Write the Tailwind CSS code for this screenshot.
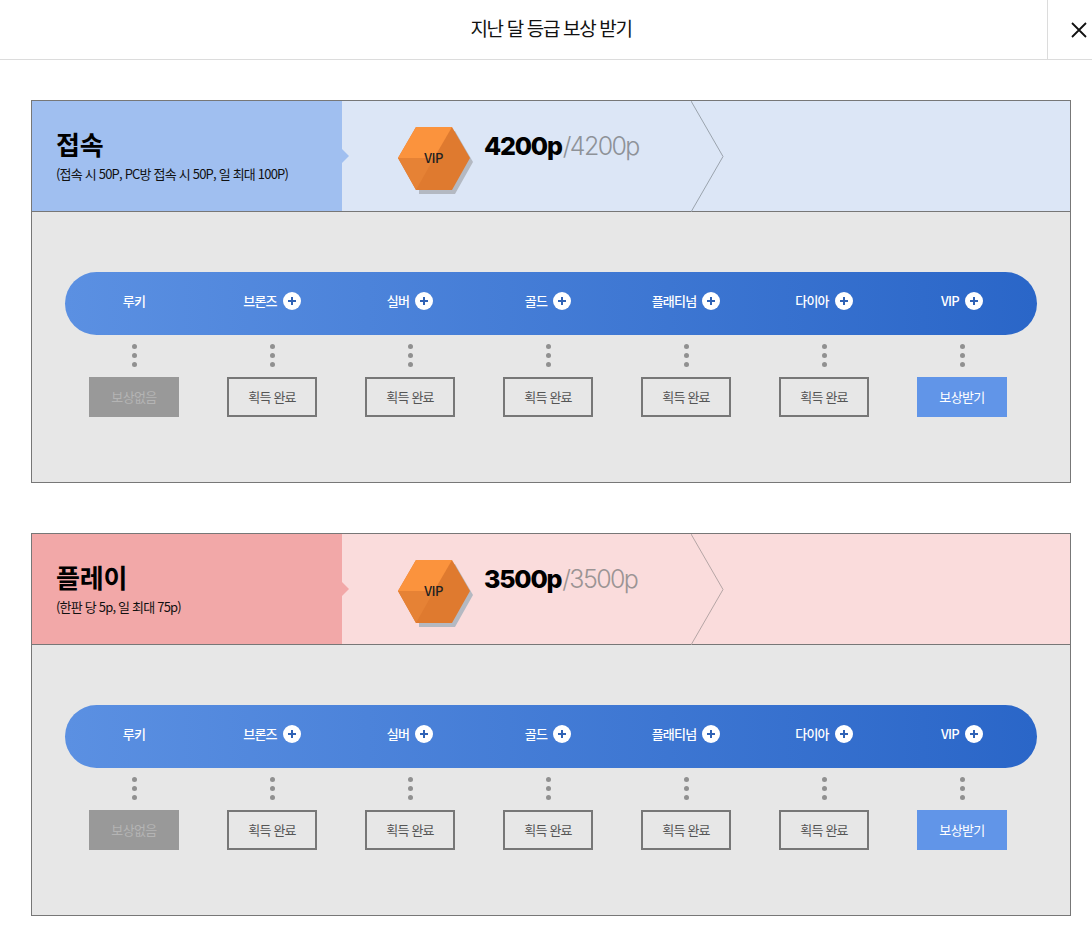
<!DOCTYPE html>
<html lang="ko">
<head>
    <meta charset="UTF-8">
    <title>지난 달 등급 보상 받기</title>
    <script src="https://cdn.jsdelivr.net/npm/@tailwindcss/browser@4"></script>
</head>
<body class="bg-white font-['Noto_Sans_CJK_KR','Noto_Sans',sans-serif] overflow-hidden">
    <!-- Header -->
    <header class="relative h-[60px] border-b border-[#dcdcdc] flex items-center justify-center">
        <h1 class="text-[19px] leading-none tracking-[-1.35px] text-[#111] pb-[5px] ml-[10px]">지난 달 등급 보상 받기</h1>
        <button class="absolute right-0 top-0 h-[59px] w-[45px] border-l border-[#dcdcdc] flex items-center justify-end pr-[4px]">
            <svg class="w-[18px] h-[18px]" viewBox="0 0 18 18" fill="none" stroke="#111" stroke-width="1.8"><path d="M2 2l14 14M16 2L2 16"/></svg>
        </button>
    </header>

    <main id="sections" class="pt-10 px-[31px] w-[1071px] box-content flex flex-col gap-[50px]"></main>

    <script>
        const themes = {
            blue: { left: 'bg-[#a0bff0]', right: 'bg-[#dce6f6]', notch: '#a0bff0', line: '#9aa3ad', total: 'text-[#8e9298]' },
            red: { left: 'bg-[#f2a8a8]', right: 'bg-[#fadcdc]', notch: '#f2a8a8', line: '#b5a5a5', total: 'text-[#9b9494]' }
        };
        const sections = [
            { theme: 'blue', title: '접속', desc: '(접속 시 50P, PC방 접속 시 50P, 일 최대 100P)', point: '4200p' },
            { theme: 'red', title: '플레이', desc: '(한판 당 5p, 일 최대 75p)', point: '3500p' }
        ];
        const grades = ['루키', '브론즈', '실버', '골드', '플래티넘', '다이아', 'VIP'];

        const plus = `<svg class="w-[18px] h-[18px] ml-[6px] shrink-0" viewBox="0 0 18 18"><circle cx="9" cy="9" r="9" fill="#fff"/><path d="M9 5v8M5 9h8" stroke="#2f62b5" stroke-width="2"/></svg>`;

        function statusButton(i) {
            if (i === 0) return `<div class="w-[90px] h-10 bg-[#999999] text-[#b4b4b4] text-[13px] tracking-[-0.6px] pb-px flex items-center justify-center">보상없음</div>`;
            if (i === 6) return `<div class="w-[90px] h-10 bg-[#6195e8] text-white text-[13px] tracking-[-0.6px] pb-px flex items-center justify-center">보상받기</div>`;
            return `<div class="w-[90px] h-10 border-2 border-[#777] text-[#555] text-[13px] tracking-[-0.8px] pb-px flex items-center justify-center">획득 완료</div>`;
        }

        document.getElementById('sections').innerHTML = sections.map(s => {
            const t = themes[s.theme];
            return `
            <section class="w-[1040px] h-[383px] border border-[#777] bg-[#e7e7e7]">
                <div class="flex h-[111px] border-b border-[#777]">
                    <div class="w-[310px] ${t.left} pl-[24px] pt-[25px] relative">
                        <h2 class="text-[26px] leading-[36px] font-bold text-black tracking-[-0.2px]">${s.title}</h2>
                        <p class="text-[13px] leading-5 tracking-[-0.8px] text-[#111] mt-[2px]">${s.desc}</p>
                        <svg class="absolute z-10 left-full top-[48px] w-2 h-[14px]" viewBox="0 0 8 14"><path d="M0 0l7 7-7 7z" fill="${t.notch}"/></svg>
                    </div>
                    <div class="flex-1 ${t.right} relative flex">
                        <svg class="absolute left-[349px] top-0 w-[34px] h-[111px]" viewBox="0 0 34 111" fill="none"><path d="M0 0l32 55.500L0 111" stroke="${t.line}"/></svg>
                        <div class="relative ml-[56px] mt-[26px] w-[76px] h-[68px]">
                            <svg class="absolute inset-0" width="76" height="68" viewBox="0 0 76 68">
                                <path d="M21 4h36l18 31-18 32H21z" fill="#b4b9c2"/>
                                <path d="M18 0h36l18 31-18 32H18L0 31z" fill="#df7a2f"/>
                                <path d="M0 31L18 0h36L36 31z" fill="#fb933d"/>
                                <path d="M0 31h36L18 63z" fill="#e68235"/>
                            </svg>
                            <span class="absolute left-0 top-[21px] w-[71px] text-center text-[13px] leading-5 font-medium tracking-[-0.5px] text-[#222]">VIP</span>
                        </div>
                        <div class="ml-[10px] mt-[26px] text-[25px] leading-[38px] font-['Inter',sans-serif]">
                            <b class="font-extrabold text-black tracking-[-1.2px]">${s.point}</b><span class="${t.total} font-light ml-px tracking-[-1.6px]">/${s.point}</span>
                        </div>
                    </div>
                </div>
                <div class="pt-[60px] pl-[33px]">
                    <div class="w-[972px] h-[63px] rounded-full bg-linear-to-r from-[#5b90e2] to-[#2a66c8]">
                        <div class="grid grid-cols-[repeat(7,138px)] h-full">
                            ${grades.map((g, i) => `<div class="flex items-center justify-center text-white text-[13px] font-medium tracking-[-0.8px] pb-[5px]">${g}${i ? plus : ''}</div>`).join('')}
                        </div>
                    </div>
                    <div class="grid grid-cols-[repeat(7,138px)]">
                        ${grades.map((g, i) => `<div class="flex flex-col items-center">
                            <div class="flex flex-col gap-[4px] mt-[9px] mb-[10px]">
                                <i class="block w-[5px] h-[5px] rounded-full bg-[#909090]"></i>
                                <i class="block w-[5px] h-[5px] rounded-full bg-[#909090]"></i>
                                <i class="block w-[5px] h-[5px] rounded-full bg-[#909090]"></i>
                            </div>
                            ${statusButton(i)}
                        </div>`).join('')}
                    </div>
                </div>
            </section>`;
        }).join('');
    </script>
</body>
</html>
